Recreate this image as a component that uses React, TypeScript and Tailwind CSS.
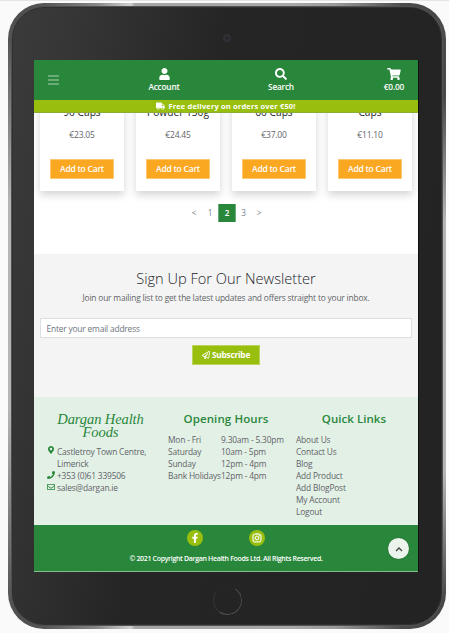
import React from 'react';
import { FaUser, FaSearch, FaShoppingCart, FaTruck, FaPhone, FaMapMarkerAlt, FaRegEnvelope, FaRegPaperPlane, FaFacebookF, FaInstagram } from 'react-icons/fa';

const products = [
  { name: '90 Caps', price: '€23.05' },
  { name: 'Powder 150g', price: '€24.45' },
  { name: '60 Caps', price: '€37.00' },
  { name: 'Caps', price: '€11.10' },
];

const hours = [
  ['Mon - Fri', '9.30am - 5.30pm'],
  ['Saturday', '10am - 5pm'],
  ['Sunday', '12pm - 4pm'],
  ['Bank Holidays', '12pm - 4pm'],
];

const links = ['About Us', 'Contact Us', 'Blog', 'Add Product', 'Add BlogPost', 'My Account', 'Logout'];

function Header() {
  return (
    <header className="relative z-10 shrink-0">
      <div className="flex h-[40px] bg-[#29873b] text-[8.3px] leading-[11px] font-semibold tracking-[-0.22px] text-white">
        <div className="flex w-[72px] items-center pl-[14px]">
          <div className="flex h-[10px] w-[11px] flex-col justify-between">
            <span className="h-[2px] bg-[#69ab76]" />
            <span className="h-[2px] bg-[#69ab76]" />
            <span className="h-[2px] bg-[#69ab76]" />
          </div>
        </div>
        <div className="flex w-[116px] flex-col items-center pt-[8px]">
          <FaUser className="h-[12px] w-[11px]" />
          <span className="mt-px">Account</span>
        </div>
        <div className="flex w-[118px] flex-col items-center pt-[8px]">
          <FaSearch className="h-[12px] w-[12px]" />
          <span className="mt-px">Search</span>
        </div>
        <div className="flex flex-1 flex-col items-end pt-[8px] pr-[14px]">
          <FaShoppingCart className="mr-[3px] h-[12px] w-[14px]" />
          <span className="mt-px">€0.00</span>
        </div>
      </div>
      <div className="flex h-[13px] items-center justify-center gap-[3px] border-b border-[#8dab35] bg-[#98bf0d] text-[7.5px] leading-[12px] font-bold tracking-[0.16px] text-white">
        <FaTruck className="h-[8px] w-[9px]" />
        <span>Free delivery on orders over €50!</span>
      </div>
    </header>
  );
}

function Products() {
  return (
    <section className="-mt-[13px] flex h-[91px] shrink-0">
      {products.map((p) => (
        <div key={p.name} className="w-[96px] px-[6px]">
          <div className="flex h-[91px] flex-col items-center bg-white shadow-[0_4px_8px_rgba(0,0,0,0.17)]">
            <h3 className="mt-[5px] text-[10.2px] leading-[14px] text-[#212529]">{p.name}</h3>
            <span className="mt-[10px] text-[8.5px] leading-[12px] tracking-[-0.2px] text-[#5f6468]">{p.price}</span>
            <button className="mt-[18px] h-[20px] w-[64px] border border-[#fcc86f] bg-[#faa722] text-[8.5px] leading-[18px] font-semibold tracking-[-0.23px] text-white">Add to Cart</button>
          </div>
        </div>
      ))}
    </section>
  );
}

function Pagination() {
  return (
    <nav className="mt-[13px] flex h-[18px] shrink-0 justify-center pl-[1px] text-center text-[8.2px] leading-[18px] text-[#7b8288]">
      <span className="w-[16px]">&lt;</span>
      <span className="w-[16px]">1</span>
      <span className="w-[18px] border-x border-[#6aab77] bg-[#29873b] font-semibold text-white">2</span>
      <span className="w-[15px]">3</span>
      <span className="w-[16px]">&gt;</span>
    </nav>
  );
}

function Newsletter() {
  return (
    <section className="mt-[32px] flex h-[143px] shrink-0 flex-col items-center bg-[#f4f4f4] px-[6px]">
      <h2 className="mt-[15px] text-[14.6px] leading-[18px] font-light whitespace-nowrap text-[#212529]">Sign Up For Our Newsletter</h2>
      <p className="mt-[5px] text-[8.4px] leading-[12px] tracking-[-0.18px] whitespace-nowrap text-[#5f6468]">Join our mailing list to get the latest updates and offers straight to your inbox.</p>
      <input className="mt-[14px] h-[20px] w-full border border-[#dcdfe3] bg-white pr-[5px] pl-[5.5px] text-[8.4px] leading-[16px] tracking-[-0.18px] placeholder:text-[#6c757d]" placeholder="Enter your email address" />
      <button className="mt-[7px] flex h-[20px] w-[68px] items-center justify-center gap-[2px] border border-[#bcd45e] bg-[#98bf0d] text-[8.3px] font-bold tracking-[-0.22px] text-white">
        <FaRegPaperPlane className="h-[8px] w-[8px]" />
        Subscribe
      </button>
    </section>
  );
}

function Footer() {
  return (
    <footer className="shrink-0 text-[8.4px] leading-[12px] tracking-[-0.18px] text-[#5f6468]">
      <div className="flex h-[128px] bg-[#e3f0e6] whitespace-nowrap">
        <div className="w-[134px] pl-[13px]">
          <h4 className="mt-[16px] mr-[14px] text-center font-['Liberation_Serif',serif] text-[14.5px] leading-[12.5px] font-normal tracking-[-0.1px] text-[#29873b] italic">Dargan Health<br />Foods</h4>
          <div className="mt-[8px] flex">
            <FaMapMarkerAlt className="mr-[2px] h-[8px] w-[8px] text-[#29873b]" />
            <span>Castletroy Town Centre,<br />Limerick</span>
          </div>
          <div className="flex">
            <FaPhone className="mt-px mr-[2px] h-[8px] w-[8px] text-[#29873b]" />
            <span>+353 (0)61 339506</span>
          </div>
          <div className="flex">
            <FaRegEnvelope className="mt-px mr-[2px] h-[8px] w-[8px] text-[#29873b]" />
            <span>sales@dargan.ie</span>
          </div>
        </div>
        <div className="w-[128px]">
          <h4 className="mt-[14px] pr-[12px] text-center text-[11.5px] leading-[16px] font-semibold tracking-[0.1px] text-[#29873b]">Opening Hours</h4>
          <div className="mt-[7px]">
            {hours.map(([day, time]) => (
              <div key={day} className="flex">
                <span className="w-[53px]">{day}</span>
                <span>{time}</span>
              </div>
            ))}
          </div>
        </div>
        <div className="w-[122px]">
          <h4 className="mt-[14px] pr-[6px] text-center text-[11.5px] leading-[16px] font-semibold tracking-[0.05px] text-[#29873b]">Quick Links</h4>
          <ul className="mt-[7px]">
            {links.map((l) => <li key={l}>{l}</li>)}
          </ul>
        </div>
      </div>
      <div className="relative h-[47px] border-b border-[#85ba90] bg-[#29873b] text-white">
        <div className="flex justify-center gap-[46px] pt-[5px]">
          <span className="flex size-[16px] items-center justify-center rounded-full bg-[#98bf0d]"><FaFacebookF className="h-[10px] w-[10px]" /></span>
          <span className="flex size-[16px] items-center justify-center rounded-full bg-[#98bf0d]"><FaInstagram className="h-[10px] w-[10px]" stroke="white" strokeWidth="16" /></span>
        </div>
        <p className="mt-[7px] text-center text-[7px] leading-[12px] font-semibold tracking-[-0.33px]">© 2021 Copyright Dargan Health Foods Ltd. All Rights Reserved.</p>
        <button className="absolute top-[13px] right-[9px] flex size-[21px] items-center justify-center rounded-full bg-[#eaf3ec] shadow-[0_0_2px_rgba(0,0,0,0.3)]">
          <svg viewBox="0 0 8 6" className="h-[6px] w-[8px]" fill="none" stroke="#444" strokeWidth="1.3"><path d="M1 5 4 2l3 3" /></svg>
        </button>
      </div>
    </footer>
  );
}

export default function App() {
  return (
    <div className="h-[633px] w-[449px] overflow-hidden border-t border-[#e4e4e4] bg-[#fafafa] pt-[2px] pl-[8px] font-['Open_Sans',sans-serif]">
      <div className="h-[626px] w-[438px] rounded-[36px] bg-[linear-gradient(180deg,#4c4c4c_0%,#555_6%,#b5b5b5_32%,#b5b5b5_65%,#555_95%,#4c4c4c_100%),linear-gradient(180deg,#4c4c4c_0%,#484848_15%,#b5b5b5_35%,#b5b5b5_75%,#484848_95%,#444_100%),linear-gradient(90deg,#4c4c4c_0%,#555_8%,#858585_20%,#d0d0d0_28%,#a5a5a5_29%,#a8a8a8_65%,#999_75%,#4c4c4c_90%,#444_100%)] bg-[length:10px_100%,10px_100%,100%_100%] bg-[position:left,right,center] bg-no-repeat p-[3px]">
        <div className="h-[620px] w-[432px] rounded-[33px] bg-[#505050] p-[1px]">
          <div className="relative flex h-[618px] w-[430px] flex-col rounded-[32px] border border-[#303030] bg-[linear-gradient(100deg,#3b3b3b_0%,#353535_13%,#252525_40%,#232323_100%)] pt-[52px] pl-[21px]">
            <div className="absolute top-[26px] left-[210px] size-[8px] rounded-full border-2 border-[#303037] bg-[#28282d]" />
            <main className="flex h-[512px] w-[384px] flex-col overflow-hidden bg-white shadow-[1px_0_0_#111]">
              <Header />
              <Products />
              <Pagination />
              <Newsletter />
              <Footer />
            </main>
            <div className="absolute top-[578px] left-[200px] size-[29px] rotate-[-10deg] rounded-full border border-t-[#282828] border-r-[#484848] border-b-[#505050] border-l-[#353535]" />
          </div>
        </div>
      </div>
    </div>
  );
}
